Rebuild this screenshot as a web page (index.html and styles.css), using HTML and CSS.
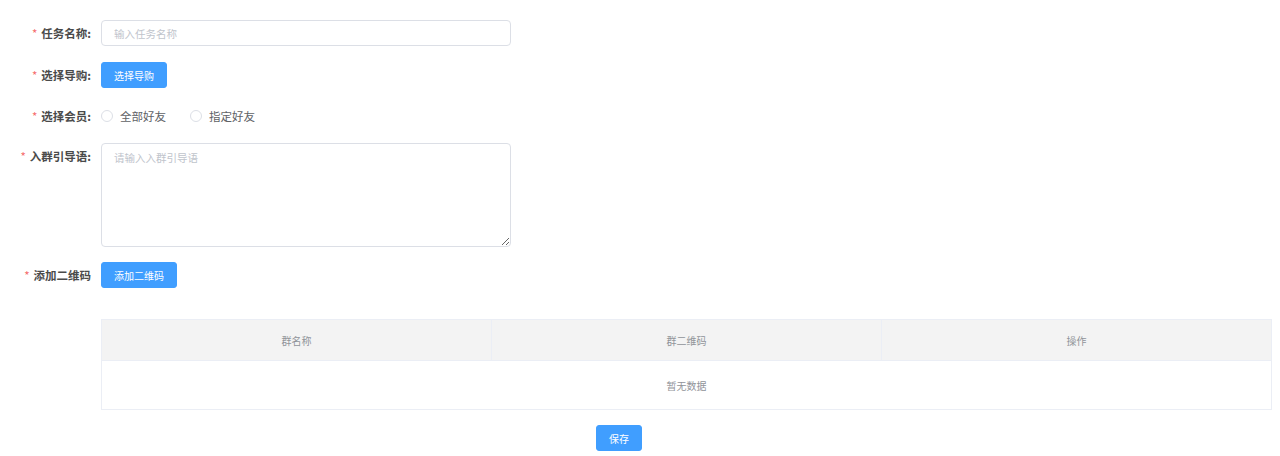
FILE: index.html
```html
<!DOCTYPE html>
<html lang="zh-CN">
  <head>
    <meta charset="UTF-8" />
    <meta name="viewport" content="width=device-width, initial-scale=1.0" />
    <title>添加任务</title>
    <link rel="stylesheet" href="styles.css">
  </head>
  <body>
    <form class="task-form" onsubmit="return false">
      <div class="form-item item-name">
        <label class="form-label required">任务名称:</label>
        <div class="form-content">
          <input type="text" class="text-input" placeholder="输入任务名称" />
        </div>
      </div>
      <div class="form-item item-guide">
        <label class="form-label required">选择导购:</label>
        <div class="form-content">
          <button type="button" class="btn btn-primary">选择导购</button>
        </div>
      </div>
      <div class="form-item item-member">
        <label class="form-label required">选择会员:</label>
        <div class="form-content radio-group">
          <label class="radio"><span class="radio-dot"></span>全部好友</label>
          <label class="radio"><span class="radio-dot"></span>指定好友</label>
        </div>
      </div>
      <div class="form-item item-words">
        <label class="form-label required">入群引导语:</label>
        <div class="form-content">
          <textarea class="text-area" placeholder="请输入入群引导语"></textarea>
        </div>
      </div>
      <div class="form-item item-qrcode">
        <label class="form-label required">添加二维码</label>
        <div class="form-content">
          <button type="button" class="btn btn-primary">添加二维码</button>
        </div>
      </div>

      <div class="table-wrap">
        <table class="data-table">
          <thead>
            <tr>
              <th>群名称</th>
              <th>群二维码</th>
              <th>操作</th>
            </tr>
          </thead>
          <tbody>
            <tr>
              <td colspan="3" class="empty">暂无数据</td>
            </tr>
          </tbody>
        </table>
      </div>

      <div class="form-footer">
        <button type="submit" class="btn btn-primary btn-save">保存</button>
      </div>
    </form>
  </body>
</html>
```

FILE: styles.css
```css
body {
  margin: 0;
  font-family: "Noto Sans CJK SC", "Microsoft YaHei", sans-serif;
  font-size: 12px;
  color: #606266;
  background: #fff;
}
.task-form {
  padding-top: 20px;
}
.form-item {
  display: flex;
  align-items: flex-start;
}
.item-name {
  margin-bottom: 16px;
}
.item-guide {
  margin-bottom: 15px;
}
.item-member {
  margin-bottom: 14px;
}
.item-words {
  margin-bottom: 15px;
}
.form-label {
  width: 91px;
  padding-right: 10px;
  text-align: right;
  font-weight: bold;
  font-size: 11.5px;
  color: #4a4a4a;
  line-height: 26px;
  flex-shrink: 0;
}
.required::before {
  content: "*";
  color: #f56c6c;
  margin-right: 4px;
  font-weight: normal;
}
.text-input,
.text-area {
  box-sizing: border-box;
  width: 410px;
  border: 1px solid #dcdfe6;
  border-radius: 4px;
  font-family: inherit;
  font-size: 10.5px;
  color: #606266;
  outline: none;
}
.text-input {
  height: 26px;
  padding: 0 12px;
}
.text-area {
  display: block;
  height: 104px;
  padding: 5px 12px;
  line-height: 17px;
  resize: vertical;
}
.text-input::placeholder,
.text-area::placeholder {
  color: #c0c4cc;
}
.btn {
  height: 26px;
  padding: 0 12px;
  border-radius: 3px;
  font-family: inherit;
  font-size: 10px;
  cursor: pointer;
}
.btn-primary {
  background: #409eff;
  border: 1px solid #409eff;
  color: #fff;
}
.radio-group {
  display: flex;
  gap: 24px;
  line-height: 26px;
  font-size: 11.5px;
}
.radio {
  display: flex;
  align-items: center;
  gap: 7px;
  color: #606266;
  cursor: pointer;
}
.radio-dot {
  box-sizing: border-box;
  width: 12px;
  height: 12px;
  border: 1px solid #dcdfe6;
  border-radius: 50%;
  background: #fff;
}
.table-wrap {
  margin: 31px 8px 0 101px;
}
.data-table {
  width: 100%;
  border-collapse: collapse;
  table-layout: fixed;
  border: 1px solid #ebeef5;
  font-size: 10px;
}
.data-table th {
  height: 40px;
  padding: 0;
  background: #f3f3f3;
  border-right: 1px solid #ebeef5;
  border-bottom: 1px solid #ebeef5;
  font-weight: normal;
  color: #909399;
  text-align: center;
}
.data-table td.empty {
  height: 48px;
  padding: 0;
  text-align: center;
  color: #909399;
}
.form-footer {
  margin: 15px 0 0 596px;
}
.btn-save {
  width: 46px;
  padding: 0;
}
```
